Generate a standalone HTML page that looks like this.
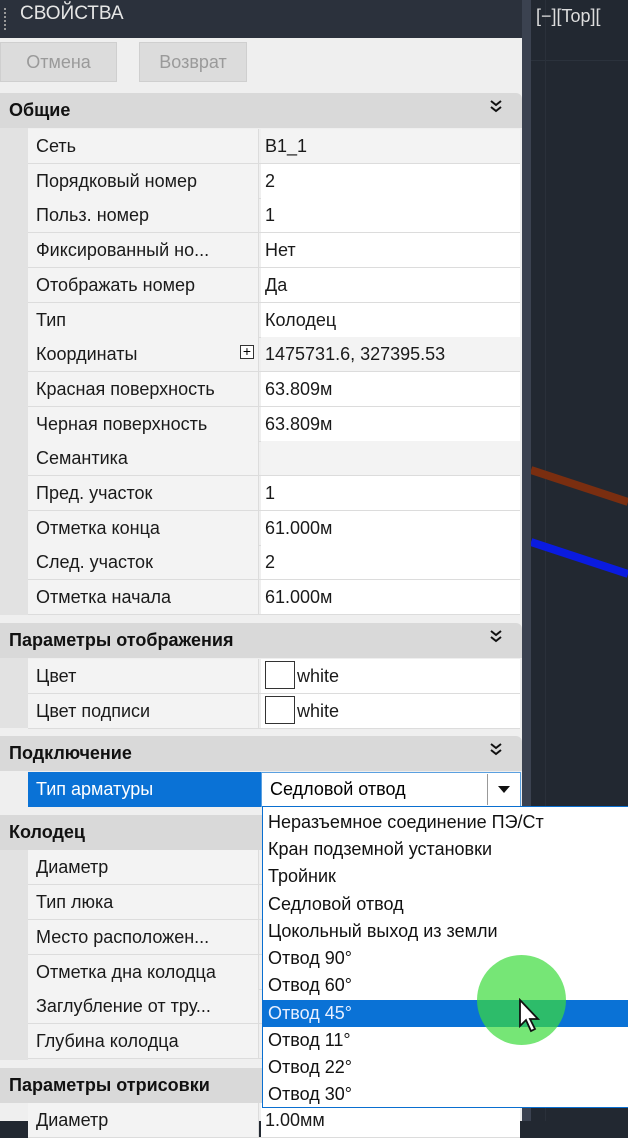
<!DOCTYPE html>
<html><head><meta charset="utf-8"><style>
*{margin:0;padding:0;box-sizing:border-box}
body{width:628px;height:1121px;overflow:hidden;background:#222831;font-family:"Liberation Sans","DejaVu Sans",sans-serif;position:relative}
.a{position:absolute}
.panel{left:0;top:38px;width:522px;height:1083px;background:#efefef}
.title{left:0;top:0;width:522px;height:38px;background:#2b313c;color:#e6e6e6;font-size:19px;line-height:28px;padding-left:20px}
.btn{top:42px;height:40px;background:#dcdcdc;border:1px solid #cfcfcf;color:#9a9a9a;font-size:18px;line-height:38px;text-align:center}
.hdr{left:0;width:522px;height:35px;background:#d9d9d9;font-weight:bold;font-size:18px;line-height:35px;padding-left:9px;color:#111;border-top-right-radius:6px}
.hdr svg{position:absolute;right:20px;top:7px}
.row{left:28px;width:492px;height:35px;font-size:18px;line-height:34px;color:#1a1a1a;border-bottom:1.5px solid #dcdcdc}
.row .l{position:absolute;left:0;width:231px;height:34px;background:#f3f3f3;padding-left:8px;white-space:nowrap;overflow:hidden;border-right:1.5px solid #dcdcdc}
.row .v{position:absolute;left:233px;width:259px;height:34px;background:#fff;padding-left:4px;white-space:nowrap}
.row .v.g{background:#f3f3f3}
.sw{display:inline-block;width:30px;height:28px;border:1.5px solid #333;vertical-align:middle;margin:-4px 2px 0 0;background:#fff}
.dd{left:262px;top:806px;width:366px;height:302px;background:#fff;border:1.5px solid #0a6fd0;border-right:none}
.it{position:absolute;left:0;width:366px;height:27px;font-size:18px;line-height:27px;padding-left:5px;color:#111}
</style></head><body>
<div class="a" style="left:522px;top:0;width:9px;height:1121px;background:#3b4250"></div>
<div class="a" style="left:531px;top:60px;width:97px;height:1px;background:#2b323c"></div>
<div class="a" style="left:545px;top:0;width:1px;height:1121px;background:#2a303a"></div>
<div class="a" style="left:536px;top:6px;color:#ddd;font-size:18px">[−][Top][</div>
<svg class="a" style="left:531px;top:440px" width="97" height="150"><line x1="0" y1="30" x2="97" y2="62" stroke="#7a2e10" stroke-width="8"/><line x1="0" y1="102" x2="97" y2="134" stroke="#0a1be0" stroke-width="8"/></svg>
<div class="a title">СВОЙСТВА</div>
<div class="a" style="left:4px;top:8px;width:4px;height:22px;border-left:2px dotted #999"></div>
<div class="a panel"></div>
<div class="a btn" style="left:0;width:117px">Отмена</div>
<div class="a btn" style="left:139px;width:108px">Возврат</div>
<div class="a" style="left:0;top:128px;width:28px;height:487px;background:#e2e2e2"></div>

<div class="a hdr" style="top:93px">Общие<svg width="12" height="14"><path d="M1 1L6 5L11 1M1 7L6 11L11 7" fill="none" stroke="#111" stroke-width="2"/></svg></div>
<div class="a row" style="top:129px"><div class="l">Сеть</div><div class="v g">B1_1</div></div>
<div class="a row" style="top:164px"><div class="l">Порядковый номер</div><div class="v">2</div></div>
<div class="a row" style="top:198px"><div class="l">Польз. номер</div><div class="v">1</div></div>
<div class="a row" style="top:233px"><div class="l">Фиксированный но...</div><div class="v">Нет</div></div>
<div class="a row" style="top:268px"><div class="l">Отображать номер</div><div class="v">Да</div></div>
<div class="a row" style="top:303px"><div class="l">Тип</div><div class="v">Колодец</div></div>
<div class="a row" style="top:337px"><div class="l">Координаты</div><div class="v g">1475731.6, 327395.53</div></div>
<div class="a" style="left:240px;top:345px;width:14px;height:14px;border:1px solid #333;font-size:14px;line-height:11px;text-align:center;background:#fff">+</div>
<div class="a row" style="top:372px"><div class="l">Красная поверхность</div><div class="v">63.809м</div></div>
<div class="a row" style="top:407px"><div class="l">Черная поверхность</div><div class="v">63.809м</div></div>
<div class="a row" style="top:441px"><div class="l">Семантика</div><div class="v g"></div></div>
<div class="a row" style="top:476px"><div class="l">Пред. участок</div><div class="v">1</div></div>
<div class="a row" style="top:511px"><div class="l">Отметка конца</div><div class="v">61.000м</div></div>
<div class="a row" style="top:545px"><div class="l">След. участок</div><div class="v">2</div></div>
<div class="a row" style="top:580px"><div class="l">Отметка начала</div><div class="v">61.000м</div></div>

<div class="a hdr" style="top:623px">Параметры отображения<svg width="12" height="14"><path d="M1 1L6 5L11 1M1 7L6 11L11 7" fill="none" stroke="#111" stroke-width="2"/></svg></div>
<div class="a" style="left:0;top:658px;width:28px;height:70px;background:#e2e2e2"></div>
<div class="a row" style="top:659px"><div class="l">Цвет</div><div class="v"><span class="sw"></span>white</div></div>
<div class="a row" style="top:694px"><div class="l">Цвет подписи</div><div class="v"><span class="sw"></span>white</div></div>

<div class="a hdr" style="top:736px">Подключение<svg width="12" height="14"><path d="M1 1L6 5L11 1M1 7L6 11L11 7" fill="none" stroke="#111" stroke-width="2"/></svg></div>
<div class="a" style="left:28px;top:772px;width:233px;height:35px;background:#0a72d6;color:#fff;font-size:18px;line-height:34px;padding-left:8px">Тип арматуры</div>
<div class="a" style="left:261px;top:772px;width:260px;height:35px;background:#fff;border:1.5px solid #5aa0e0;font-size:18px;line-height:32px;padding-left:8px">Седловой отвод</div>
<div class="a" style="left:487px;top:774px;width:32px;height:31px;border-left:1px solid #999;background:#fff"><div style="margin:12px auto 0;width:0;height:0;border-left:6px solid transparent;border-right:6px solid transparent;border-top:7px solid #111"></div></div>

<div class="a hdr" style="top:815px">Колодец</div>
<div class="a" style="left:0;top:850px;width:28px;height:210px;background:#e2e2e2"></div>
<div class="a row" style="top:850px"><div class="l">Диаметр</div></div>
<div class="a row" style="top:885px"><div class="l">Тип люка</div></div>
<div class="a row" style="top:920px"><div class="l">Место расположен...</div></div>
<div class="a row" style="top:955px"><div class="l">Отметка дна колодца</div></div>
<div class="a row" style="top:989px"><div class="l">Заглубление от тру...</div></div>
<div class="a row" style="top:1024px"><div class="l">Глубина колодца</div></div>
<div class="a hdr" style="top:1068px">Параметры отрисовки</div>
<div class="a row" style="top:1103px"><div class="l">Диаметр</div><div class="v">1.00мм</div></div>

<div class="a dd">
<div class="it" style="top:2px">Неразъемное соединение ПЭ/Ст</div>
<div class="it" style="top:29px">Кран подземной установки</div>
<div class="it" style="top:56px">Тройник</div>
<div class="it" style="top:84px">Седловой отвод</div>
<div class="it" style="top:111px">Цокольный выход из земли</div>
<div class="it" style="top:138px">Отвод 90°</div>
<div class="it" style="top:165px">Отвод 60°</div>
<div class="it" style="top:193px;background:#0a72d6;color:#e8f0ff">Отвод 45°</div>
<div class="it" style="top:220px">Отвод 11°</div>
<div class="it" style="top:247px">Отвод 22°</div>
<div class="it" style="top:274px">Отвод 30°</div>
</div>
<div class="a" style="left:477px;top:955px;width:89px;height:90px;border-radius:50%;background:rgba(60,220,60,0.7)"></div>
<svg class="a" style="left:518px;top:998px" width="26" height="38"><path d="M2 2 L2 28 L8 22 L13 33 L17 31 L12 21 L20 21 Z" fill="#fff" stroke="#111" stroke-width="1.8"/></svg>
</body></html>
